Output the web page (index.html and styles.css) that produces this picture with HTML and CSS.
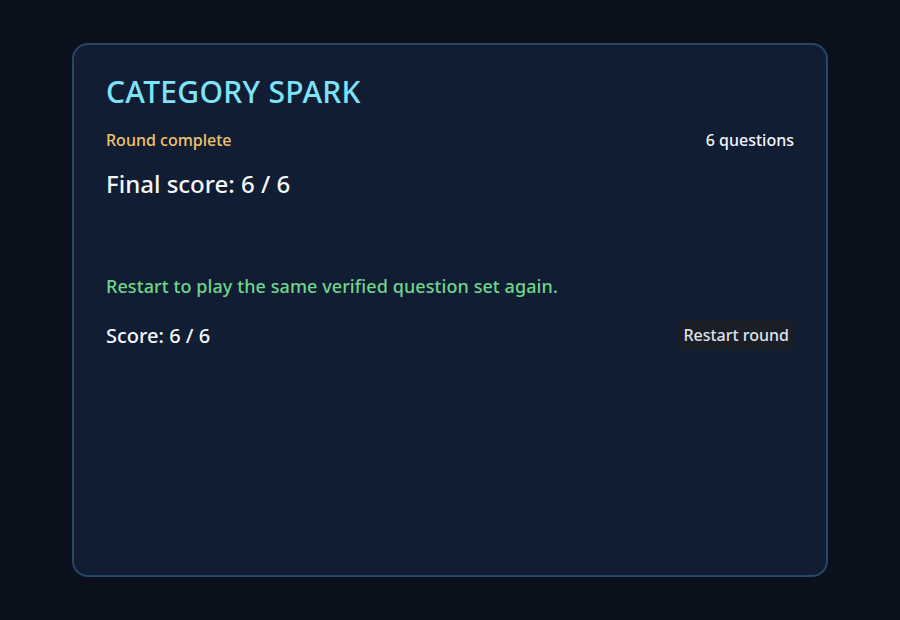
FILE: index.html
```html
<!DOCTYPE html>
<html lang="en">
<head>
    <meta charset="UTF-8">
    <meta name="viewport" content="width=device-width, initial-scale=1.0">
    <title>Category Spark</title>
    <link rel="stylesheet" href="styles.css">
</head>
<body>
    <div class="quiz-card">
        <h1>CATEGORY SPARK</h1>
        <div class="quiz-meta">
            <span class="quiz-status">Round complete</span>
            <span class="quiz-count">6 questions</span>
        </div>
        <div class="quiz-question">Final score: 6 / 6</div>
        <div class="quiz-options"></div>
        <div class="quiz-feedback">Restart to play the same verified question set again.</div>
        <div class="quiz-footer">
            <span class="quiz-score">Score: 6 / 6</span>
            <button class="restart-btn">Restart round</button>
        </div>
    </div>
</body>
</html>
```

FILE: styles.css
```css
body {
    font-family: "Noto Sans", "Open Sans", sans-serif;
    background-color: #0b111c;
    margin: 0;
    padding: 43px 72px;
    color: #f4f6fa;
}

.quiz-card {
    box-sizing: border-box;
    height: 534px;
    background-color: #111d33;
    border: 2px solid #284668;
    border-radius: 16px;
    padding: 26px 32px;
}

h1 {
    margin: 0;
    font-size: 30px;
    font-weight: 500;
    letter-spacing: 0.3px;
    color: #7ee3f7;
    line-height: 41px;
}

.quiz-meta {
    display: flex;
    justify-content: space-between;
    align-items: center;
    margin-top: 17px;
    font-size: 16px;
    line-height: 22px;
    font-weight: 500;
}

.quiz-status {
    color: #f1c36a;
}

.quiz-count {
    font-weight: 500;
    color: #f4f6fa;
}

.quiz-question {
    margin-top: 16px;
    font-size: 24px;
    line-height: 33px;
    font-weight: 500;
}

.quiz-options {
    height: 74px;
}

.quiz-feedback {
    font-size: 18px;
    line-height: 25px;
    font-weight: 500;
    letter-spacing: 0.08px;
    color: #6fd68c;
}

.quiz-footer {
    display: flex;
    justify-content: space-between;
    align-items: center;
    margin-top: 21px;
}

.quiz-score {
    font-size: 20px;
    font-weight: 500;
}

.restart-btn {
    font-family: inherit;
    font-size: 16px;
    font-weight: 500;
    line-height: 22px;
    padding: 4px 5px;
    border: none;
    border-radius: 3px;
    background-color: #1a1e27;
    color: #dfe2e8;
    cursor: pointer;
}
```
